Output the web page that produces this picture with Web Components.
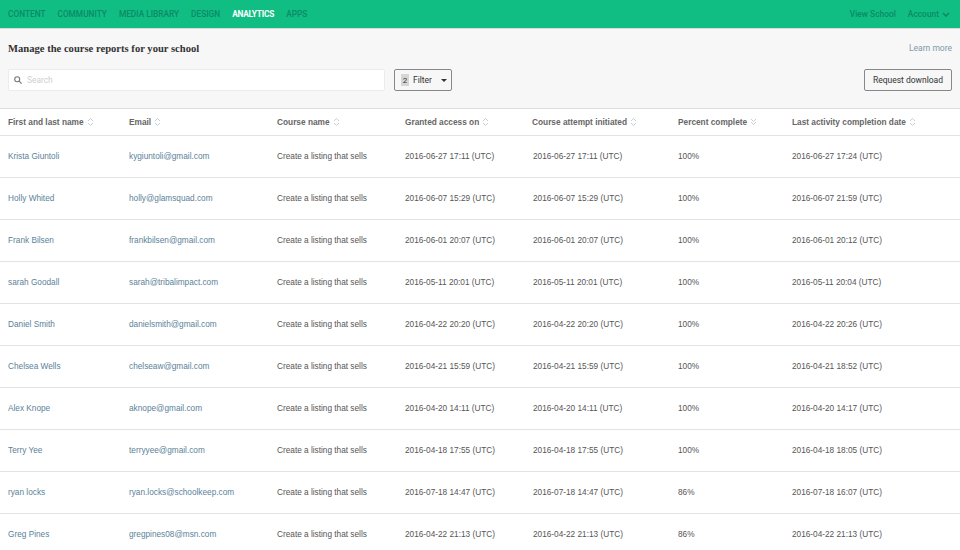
<!DOCTYPE html>
<html>
<head>
<meta charset="utf-8">
<style>
  html, body { margin: 0; padding: 0; background: #fff; height: 550px; overflow: hidden; }
</style>
</head>
<body>
<app-nav></app-nav>
<page-head></page-head>
<report-table></report-table>

<script>
// top green bar
class AppNav extends HTMLElement {
  constructor() {
    super();
    this.attachShadow({ mode: 'open' }).innerHTML = `
      <style>
        :host { display: flex; align-items: center; height: 28px; background: #10be83; border-bottom: 1px solid #d9d9d9;
          padding: 0 10px 0 8px; font: 500 8.3px Roboto, sans-serif; color: #0b8a64; }
        nav { display: flex; gap: 12px; flex: 1; }
        b { font-weight: 700; letter-spacing: -.2px; color: #fff; }
        .right { display: flex; gap: 12px; align-items: center; font-size: 8.4px; }
        .acc { display: flex; gap: 3px; align-items: center; }
        svg { display: block; }
      </style>
      <nav><span>CONTENT</span><span>COMMUNITY</span><span>MEDIA LIBRARY</span><span>DESIGN</span><b>ANALYTICS</b><span>APPS</span></nav>
      <div class="right">
        <span>View School</span>
        <span class="acc">Account
          <svg width="8" height="5" viewBox="0 0 8 5"><path d="M1 1l3 3 3-3" fill="none" stroke="#0b8a64" stroke-width="1.6"/></svg>
        </span>
      </div>`;
  }
}
customElements.define('app-nav', AppNav);

// title, search and buttons
class PageHead extends HTMLElement {
  constructor() {
    super();
    this.attachShadow({ mode: 'open' }).innerHTML = `
      <style>
        :host { display: block; background: #f7f7f7; height: 79px; padding: 0 8px; font-family: Roboto, sans-serif; box-sizing: border-box; }
        .top { display: flex; justify-content: space-between; align-items: center; height: 38px; padding-bottom: 2px; }
        h1 { margin: 0; font: 700 10.6px "Liberation Serif", serif; color: #333; }
        a { font-size: 8.5px; color: #7e9aab; }
        .tools { display: flex; align-items: stretch; height: 22px; }
        .search { width: 377px; box-sizing: border-box; background: #fff; border: 1px solid #ececec; border-radius: 2px;
          display: flex; align-items: center; gap: 5px; padding-left: 5px; font-size: 8.4px; color: #cfcfcf; }
        button { font: 400 8.5px Roboto, sans-serif; color: #333; background: #f7f7f7; border: 1px solid #888; border-radius: 2px;
          padding: 0; display: flex; align-items: center; box-sizing: border-box; }
        .filter { width: 58px; margin-left: 9px; padding-left: 6px; }
        .count { width: 8px; height: 12px; background: #d6d6d6; font-size: 8px; line-height: 13px; text-align: center; margin-right: 4px; }
        .caret { width: 0; height: 0; border: 3px solid transparent; border-top-color: #333; border-bottom: 0; margin-left: 9px; }
        .dl { width: 88px; margin-left: auto; justify-content: center; }
        svg { display: block; }
      </style>
      <div class="top"><h1>Manage the course reports for your school</h1><a>Learn more</a></div>
      <div class="tools">
        <div class="search">
          <svg width="8" height="8" viewBox="0 0 8 8"><circle cx="3.2" cy="3.2" r="2.5" fill="none" stroke="#777" stroke-width="1.1"/><path d="M5.1 5.1L7.6 7.6" stroke="#777" stroke-width="1.2"/></svg>
          Search
        </div>
        <button class="filter"><span class="count">2</span>Filter<span class="caret"></span></button>
        <button class="dl">Request download</button>
      </div>`;
  }
}
customElements.define('page-head', PageHead);

const COLS = '121px 148px 128px 127px 146px 114px 1fr';

class SortLabel extends HTMLElement {
  constructor() {
    super();
    this.attachShadow({ mode: 'open' });
  }
  connectedCallback() {
    const down = this.hasAttribute('down');
    const path = down ? 'M1 1l2.5 2.5L6 1M1 4l2.5 2.5L6 4' : 'M1 3l2.5-2.5L6 3M1 5l2.5 2.5L6 5';
    this.shadowRoot.innerHTML = `
      <style>
        :host { display: flex; align-items: center; gap: 3px; }
        svg { display: block; }
      </style>
      <slot></slot>
      <svg width="7" height="8" viewBox="0 0 7 8"><path d="${path}" fill="none" stroke="#b9c3c9" stroke-width=".8"/></svg>`;
  }
}
customElements.define('sort-label', SortLabel);

class ReportRow extends HTMLElement {
  constructor() {
    super();
    this.attachShadow({ mode: 'open' });
  }
  // attributes are not there yet in the constructor when made with createElement
  connectedCallback() {
    const c = JSON.parse(this.getAttribute('cells'));
    this.shadowRoot.innerHTML = `
      <style>
        :host { display: grid; grid-template-columns: ${COLS}; align-items: center; height: 40px; padding: 0 0 1px 8px;
          border-top: 1px solid #e3e3e3; background: #fff; font: 8.25px "Liberation Sans", Arial, sans-serif; color: #555; }
        .link { color: #5b8299; }
        .att { padding-left: 1px; }
      </style>
      <span class="link">${c[0]}</span>
      <span class="link">${c[1]}</span>
      <span>Create a listing that sells</span>
      <span>${c[2]} (UTC)</span>
      <span class="att">${c[2]} (UTC)</span>
      <span>${c[3]}</span>
      <span>${c[4]} (UTC)</span>`;
  }
}
customElements.define('report-row', ReportRow);

class ReportHeader extends HTMLElement {
  constructor() {
    super();
    this.attachShadow({ mode: 'open' }).innerHTML = `
      <style>
        :host { display: grid; grid-template-columns: ${COLS}; align-items: center; height: 26px; padding-left: 8px;
          border-top: 1px solid #dcdcdc; background: #fff; font: 700 8.3px "Liberation Sans", Arial, sans-serif; color: #666; }
      </style>
      <sort-label>First and last name</sort-label>
      <sort-label>Email</sort-label>
      <sort-label>Course name</sort-label>
      <sort-label>Granted access on</sort-label>
      <sort-label>Course attempt initiated</sort-label>
      <sort-label down>Percent complete</sort-label>
      <sort-label>Last activity completion date</sort-label>`;
  }
}
customElements.define('report-header', ReportHeader);

const ROWS = [
  ['Krista Giuntoli', 'kygiuntoli@gmail.com', '2016-06-27 17:11', '100%', '2016-06-27 17:24'],
  ['Holly Whited', 'holly@glamsquad.com', '2016-06-07 15:29', '100%', '2016-06-07 21:59'],
  ['Frank Bilsen', 'frankbilsen@gmail.com', '2016-06-01 20:07', '100%', '2016-06-01 20:12'],
  ['sarah Goodall', 'sarah@tribalimpact.com', '2016-05-11 20:01', '100%', '2016-05-11 20:04'],
  ['Daniel Smith', 'danielsmith@gmail.com', '2016-04-22 20:20', '100%', '2016-04-22 20:26'],
  ['Chelsea Wells', 'chelseaw@gmail.com', '2016-04-21 15:59', '100%', '2016-04-21 18:52'],
  ['Alex Knope', 'aknope@gmail.com', '2016-04-20 14:11', '100%', '2016-04-20 14:17'],
  ['Terry Yee', 'terryyee@gmail.com', '2016-04-18 17:55', '100%', '2016-04-18 18:05'],
  ['ryan locks', 'ryan.locks@schoolkeep.com', '2016-07-18 14:47', '86%', '2016-07-18 16:07'],
  ['Greg Pines', 'gregpines08@msn.com', '2016-04-22 21:13', '86%', '2016-04-22 21:13']
];

class ReportTable extends HTMLElement {
  constructor() {
    super();
    const root = this.attachShadow({ mode: 'open' });
    root.innerHTML = `<style>:host { display: block; }</style><report-header></report-header>`;
    ROWS.forEach(r => {
      const row = document.createElement('report-row');
      row.setAttribute('cells', JSON.stringify(r));
      root.appendChild(row);
    });
  }
}
customElements.define('report-table', ReportTable);
</script>
</body>
</html>
